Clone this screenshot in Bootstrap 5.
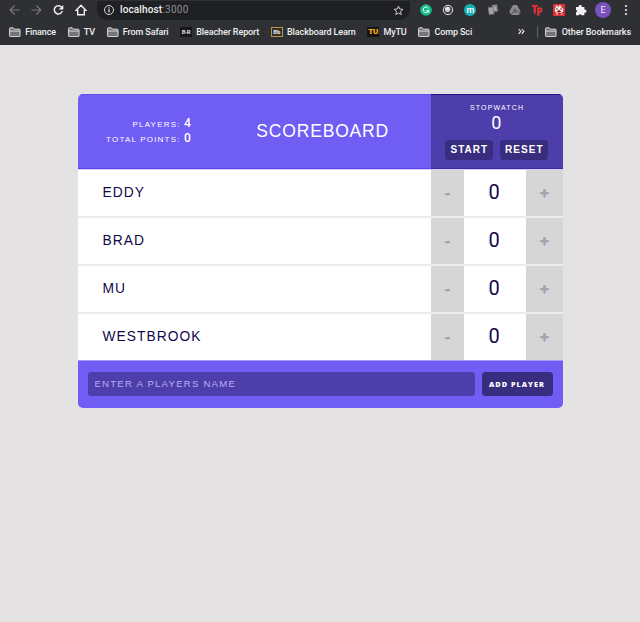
<!DOCTYPE html>
<html lang="en">
<head>
<meta charset="utf-8">
<meta name="viewport" content="width=device-width, initial-scale=1">
<title>Scoreboard</title>
<link href="https://cdn.jsdelivr.net/npm/bootstrap@5.3.0/dist/css/bootstrap.min.css" rel="stylesheet">
<style>
body{background:#e4e2e3;font-family:"Liberation Sans",Arial,sans-serif;height:622px;overflow:hidden}
.browser{height:45px;background:#2f3034;color:#f0f0f1;font-family:Roboto,sans-serif;font-size:9px;line-height:12px}
svg{display:block;flex:none}
.toolbar-row{height:20px;padding-left:9px;padding-right:7px}
.nav-icons{width:88px;gap:11px}
.omnibox{width:313px;height:19px;background:#1f2023;border-radius:0 0 10px 10px;padding:0 6px;font-size:10px}
.address{margin-left:5px;letter-spacing:.13px;font-weight:500}
.omnibox .port{color:#8d8e91;font-weight:400;letter-spacing:.3px}
.ext-icons{margin-left:10px;gap:10.2px}
.round-icon{width:12px;height:12px;border-radius:50%;font-size:9px;font-weight:700;line-height:12px;text-align:center}
.teal{background:#14b1b5}
.avatar{width:16px;height:16px;line-height:16px;background:#7a50bd;font-size:9px;font-weight:400;margin-left:-2.5px}
.more{margin:0 -4px 0 3px}
.bookmarks{height:23px;padding-left:9px;padding-right:9px;font-weight:500;white-space:nowrap}
.bm{display:flex;align-items:center;gap:4.2px;flex:none}
.bm-list{gap:11.6px;letter-spacing:-.11px}
.bm-other{letter-spacing:-.06px}
.bm-divider{height:12px;margin:0 7px 0 12px}
.tile{width:12px;height:10px;font-size:7px;line-height:10px;font-weight:900;text-align:center;overflow:hidden}
.t-br{background:#17181a;color:#ccc;font-size:6px;letter-spacing:-.4px}
.t-bb{background:#332e29;color:#ddd;border:1px solid #bd9446;font-size:6px;line-height:8px}
.t-tu{background:#141414;color:#ffad13;font-size:8px}
.board{width:485px;margin:49px 0 0 78px;border-radius:5px;overflow:hidden;text-transform:uppercase}
.board-head{height:74.5px;background:#6f5df4;color:#fff;border-top:1px solid #604be8;border-bottom:1px solid #5d47e8}
.stats{width:113px;font-size:8px;letter-spacing:1.2px;line-height:15px;text-align:right;padding-top:1px}
.stats>div{height:15px}
.digit{font-family:Roboto,sans-serif;letter-spacing:0}
.stats .digit{font-size:12px;font-weight:500;line-height:12px}
.title{font-size:17.5px;letter-spacing:.82px;line-height:20px;margin-left:65.5px;width:175px;margin-top:-1px}
.watch{width:132px;background:#4d3eac;margin-top:-1px;margin-bottom:-1px;border-top:1px solid #28108e;border-bottom:1px solid #3c28a6}
.watch-label{font-size:7px;letter-spacing:1.15px;line-height:8px;margin-top:9px}
.watch-time{font-size:18px;line-height:20px;margin-top:1px;margin-right:1.5px}
.watch-buttons{gap:7px;margin-top:6.5px;margin-right:.5px}
.dark-btn{background:#392d80;color:#fff;border:0;border-radius:3.5px;padding:0;font-weight:700;text-transform:uppercase;display:block}
.watch .dark-btn{width:48px;height:20px;font-size:10px;letter-spacing:1.05px;line-height:20px}
.player{height:48px;background:#fff;border-top:2px solid #ededee;color:#11074c}
.first-player{border-top-color:#d5cffb;border-top-width:1px;height:47.5px}
.player-name{padding-left:24.5px;font-size:13.8px;letter-spacing:1.02px;padding-top:.5px}
.step-btn{background:#d6d6d6;color:#a3a1af;font-weight:700;border:0;padding:0;-webkit-text-stroke:.6px #a3a1af}
.minus{width:33px;font-size:15px}
.plus{width:37px;font-size:15px}
.score{width:62px;font-size:20px;line-height:45px;padding-right:2px}
.board-foot{height:47.5px;background:#6f5df4;border-top:1px solid #a89cf8;padding:10.5px 10.5px 0 10px}
.name-input{width:387px;height:24px;background:#4d3eac;border:0;border-radius:3.5px;padding:0 6.5px;font-size:9.6px;letter-spacing:1.22px;color:#fff;text-transform:uppercase}
.name-input::placeholder{color:#b9aff0;opacity:1}
.add-btn{width:71px;height:24px;font-family:"Open Sans",sans-serif;font-size:7.3px;font-weight:800;letter-spacing:1px;line-height:24px}
</style>
</head>
<body>
<svg width="0" height="0" class="position-absolute"><defs>
<g id="folder"><path d="M.6 8.9V1.5q0-.7.7-.7h2.9l1.2 1.4h4.9q.7 0 .7.7v6q0 .7-.7.7H1.3q-.7 0-.7-.7z" fill="#747578" stroke="#dedede" stroke-width="1"/><path d="M1 4.1h9.8" stroke="#dedede" stroke-width=".9"/></g>
</defs></svg>
<header class="browser">
<div class="toolbar-row d-flex align-items-center">
<div class="nav-icons d-flex align-items-center">
<svg width="11" height="12" viewBox="0 0 11 12" fill="none" stroke="#77787b" stroke-width="1.2"><path d="M10.5 6H1.2M5.6 1.5 1.1 6l4.5 4.5"/></svg>
<svg width="11" height="12" viewBox="0 0 11 12" fill="none" stroke="#77787b" stroke-width="1.2"><path d="M.5 6h9.3M5.4 1.5 9.9 6l-4.5 4.5"/></svg>
<svg width="11" height="12" viewBox="0 0 11 12"><path d="M9.3 7.1A4.1 4.1 0 1 1 8.5 3.2" fill="none" stroke="#f3f3f3" stroke-width="1.5"/><path d="M10.3.9v4.5H5.8z" fill="#f3f3f3"/></svg>
<svg width="12" height="12" viewBox="0 0 12 12"><path d="M1 6.4 6 1.2l5 5.2H9.3v4.4H2.7V6.4z" fill="none" stroke="#f3f3f3" stroke-width="1.4"/></svg>
</div>
<div class="omnibox d-flex align-items-center">
<svg width="12" height="12" viewBox="0 0 12 12"><circle cx="6" cy="6" r="4.5" fill="none" stroke="#d9d9da"/><path d="M6 5.3v3.2M6 3.3v1.2" stroke="#e8e8e8" stroke-width="1.2"/></svg>
<span class="address">localhost<span class="port">:3000</span></span>
<svg class="ms-auto" width="11" height="11" viewBox="0 0 12 12"><path d="m6 1.2 1.4 3.2 3.5.3-2.7 2.3.8 3.5L6 8.7l-3 1.8.8-3.5L1.1 4.7l3.5-.3z" fill="none" stroke="#d4d4d5"/></svg>
</div>
<div class="ext-icons d-flex align-items-center">
<svg width="12" height="12" viewBox="0 0 12 12"><circle cx="6" cy="6" r="5.8" fill="#15bf88"/><path d="M8.3 4.1A2.8 2.8 0 1 0 8.7 6.5H6.5M8.7 6.5v2.2" fill="none" stroke="#fff" stroke-width="1"/></svg>
<svg width="12" height="12" viewBox="0 0 12 12"><circle cx="6" cy="6" r="4.7" fill="#444" stroke="#ddd"/><circle cx="5.6" cy="5.3" r="2.6" fill="#d5d5d5"/><path d="m3.4 4.8 3.5-1.3" stroke="#fff"/></svg>
<div class="round-icon teal">m</div>
<svg width="12" height="12" viewBox="0 0 12 12"><path d="m5 1 5-.5 1 7-5 .5z" fill="#8e8e8f"/><path d="m1 3.6 5-.6 1.2 7-5 .8z" fill="#a2a2a3" stroke="#6b6b6e" stroke-width=".6"/><path d="M8 3v3" stroke="#c9c9c9"/></svg>
<svg width="12" height="12" viewBox="0 0 12 12"><path d="M4 1h4l3.7 6.4L9.8 11H2.2L.3 7.4z" fill="#8b8b8e"/><path d="M6 4.6 7.5 7h-3zM2.2 11l1.6-3h7.7" fill="none" stroke="#4c4d50" stroke-width=".8"/></svg>
<svg width="12" height="12" viewBox="0 0 12 12" fill="none" stroke="#df3038" stroke-width="2.2"><path d="M.8 2h6M3.8 2v7.5M7.3 3.8v8"/><circle cx="8.9" cy="6" r="1.8" stroke-width="1.7"/></svg>
<svg width="12" height="12" viewBox="0 0 12 12"><path fill="#dd3033" d="M0 0h12v12H0z"/><ellipse cx="6" cy="6" rx="4.4" ry="3" fill="#eee"/><circle cx="3.7" cy="2.7" r="1.2" fill="#eee"/><circle cx="7" cy="2.4" r="1.2" fill="#eee"/><path d="M3 5h2M7 5h2M4 8l2-1.5L8 8M6 6v4" stroke="#a62227"/><path d="M3 10h2M8 10h1.5" stroke="#eee"/></svg>
<svg width="12" height="12" viewBox="0 0 12 12"><path d="M1 3h2.8a1.5 1.5 0 1 1 2.8 0h2.8v2.8a1.5 1.5 0 1 1 0 2.8v2.6H6.6a1.5 1.5 0 0 0-2.8 0H1V8.6a1.5 1.5 0 0 0 0-2.8z" fill="#f2f2f2"/></svg>
<div class="round-icon avatar">E</div>
<svg class="more" width="4" height="12" viewBox="0 0 4 12" fill="#eee"><circle cx="2" cy="2" r="1.1"/><circle cx="2" cy="6" r="1.1"/><circle cx="2" cy="10" r="1.1"/></svg>
</div>
</div>
<nav class="bookmarks d-flex align-items-center">
<div class="bm-list d-flex">
<div class="bm"><svg width="12" height="10"><use href="#folder"/></svg><span>Finance</span></div>
<div class="bm"><svg width="12" height="10"><use href="#folder"/></svg><span>TV</span></div>
<div class="bm"><svg width="12" height="10"><use href="#folder"/></svg><span>From Safari</span></div>
<div class="bm"><div class="tile t-br">B·R</div><span>Bleacher Report</span></div>
<div class="bm"><div class="tile t-bb">Bb</div><span>Blackboard Learn</span></div>
<div class="bm"><div class="tile t-tu">TU</div><span>MyTU</span></div>
<div class="bm"><svg width="12" height="10"><use href="#folder"/></svg><span>Comp Sci</span></div>
</div>
<div class="d-flex align-items-center ms-auto">
<svg width="7" height="7" viewBox="0 0 7 7" fill="none" stroke="#eee" stroke-width="1.1"><path d="m.6 1 2.2 2.4L.6 5.8M3.7 1l2.2 2.4-2.2 2.4"/></svg>
<span class="vr bm-divider"></span>
<div class="bm bm-other"><svg width="12" height="10"><use href="#folder"/></svg><span>Other Bookmarks</span></div>
</div>
</nav>
</header>
<main class="board">
<div class="board-head d-flex">
<div class="stats align-self-center"><div>Players: <span class="digit">4</span></div><div>Total Points: <span class="digit">0</span></div></div>
<h1 class="title mb-0 fw-normal align-self-center">Scoreboard</h1>
<section class="watch ms-auto text-center">
<div class="watch-label">Stopwatch</div>
<div class="watch-time digit">0</div>
<div class="watch-buttons d-flex justify-content-center"><button class="dark-btn">Start</button><button class="dark-btn">Reset</button></div>
</section>
</div>
<div class="player first-player d-flex"><div class="player-name flex-grow-1 align-self-center">Eddy</div><button class="step-btn minus">-</button><div class="score digit text-center">0</div><button class="step-btn plus">+</button></div>
<div class="player d-flex"><div class="player-name flex-grow-1 align-self-center">Brad</div><button class="step-btn minus">-</button><div class="score digit text-center">0</div><button class="step-btn plus">+</button></div>
<div class="player d-flex"><div class="player-name flex-grow-1 align-self-center">Mu</div><button class="step-btn minus">-</button><div class="score digit text-center">0</div><button class="step-btn plus">+</button></div>
<div class="player d-flex"><div class="player-name flex-grow-1 align-self-center">Westbrook</div><button class="step-btn minus">-</button><div class="score digit text-center">0</div><button class="step-btn plus">+</button></div>
<form class="board-foot d-flex justify-content-between"><input class="name-input" placeholder="Enter a players name" aria-label="Player name"><button type="button" class="dark-btn add-btn">Add Player</button></form>
</main>
<script src="https://cdn.jsdelivr.net/npm/bootstrap@5.3.0/dist/js/bootstrap.bundle.min.js"></script>
</body>
</html>
